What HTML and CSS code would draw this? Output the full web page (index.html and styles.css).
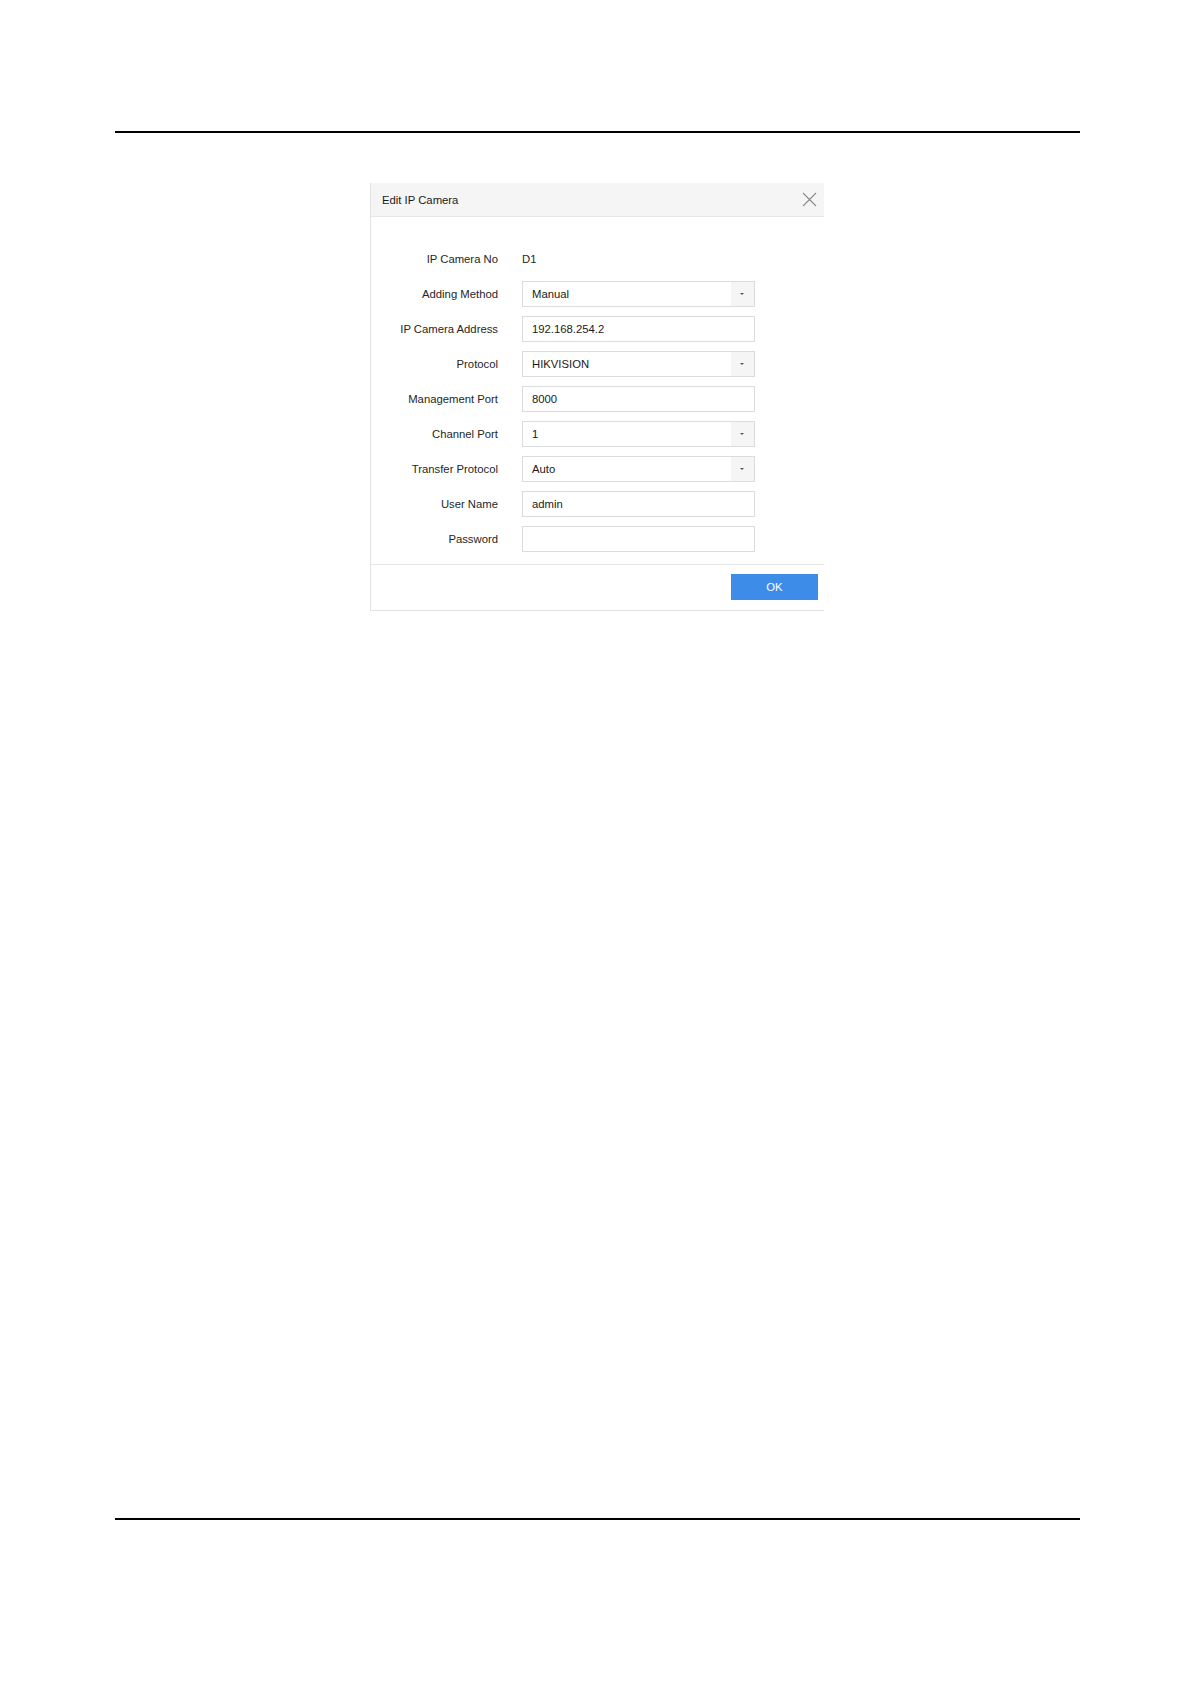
FILE: index.html
```html
<!DOCTYPE html>
<html>
<head>
    <title>Edit IP Camera</title>
    <link rel="stylesheet" href="styles.css">
</head>
<body>
    <div class="page">
        <div class="rule rule-top"></div>

        <div class="dialog">
            <div class="dialog-header">
                <span class="dialog-title">Edit IP Camera</span>
                <svg class="close" width="15" height="15" viewBox="0 0 15 15">
                    <path d="M1 1 L14 14 M14 1 L1 14" stroke="#8a8a8a" stroke-width="1.1" fill="none"/>
                </svg>
            </div>

            <div class="dialog-body">
                <div class="row">
                    <label>IP Camera No</label>
                    <span class="value">D1</span>
                </div>
                <div class="row">
                    <label>Adding Method</label>
                    <div class="field select"><span>Manual</span><span class="arrow"></span></div>
                </div>
                <div class="row">
                    <label>IP Camera Address</label>
                    <div class="field"><span>192.168.254.2</span></div>
                </div>
                <div class="row">
                    <label>Protocol</label>
                    <div class="field select"><span>HIKVISION</span><span class="arrow"></span></div>
                </div>
                <div class="row">
                    <label>Management Port</label>
                    <div class="field"><span>8000</span></div>
                </div>
                <div class="row">
                    <label>Channel Port</label>
                    <div class="field select"><span>1</span><span class="arrow"></span></div>
                </div>
                <div class="row">
                    <label>Transfer Protocol</label>
                    <div class="field select"><span>Auto</span><span class="arrow"></span></div>
                </div>
                <div class="row">
                    <label>User Name</label>
                    <div class="field"><span>admin</span></div>
                </div>
                <div class="row">
                    <label>Password</label>
                    <div class="field"></div>
                </div>
            </div>

            <div class="dialog-footer">
                <button type="button" class="btn-ok">OK</button>
            </div>
        </div>

        <div class="rule rule-bottom"></div>
    </div>
</body>
</html>
```

FILE: styles.css
```css
body {
    margin: 0;
    background: #fff;
    font-family: "Liberation Sans", Arial, sans-serif;
    color: #222;
}

.page {
    width: 1181px;
    height: 1685px;
    padding-top: 131px;
    box-sizing: border-box;
}

.rule {
    height: 2px;
    background: #000;
    margin-left: 115px;
    width: 965px;
}

.rule-bottom {
    margin-top: 907px;
}

.dialog {
    margin-top: 50px;
    margin-left: 370px;
    width: 454px;
    border-left: 1px solid #e2e2e2;
    border-bottom: 1px solid #e2e2e2;
    box-sizing: border-box;
}

.dialog-header {
    height: 33px;
    background: #f5f5f5;
    border-bottom: 1px solid #e6e6e6;
    display: flex;
    align-items: center;
    justify-content: space-between;
    padding: 0 7px 0 11px;
}

.dialog-title {
    font-size: 11.3px;
    color: #1a1a1a;
}

.dialog-body {
    padding: 29px 0 12px 0;
    display: flex;
    flex-direction: column;
    gap: 9px;
    border-bottom: 1px solid #e6e6e6;
}

.row {
    display: flex;
    align-items: center;
    height: 26px;
    gap: 24px;
}

.row label {
    width: 127px;
    text-align: right;
    font-size: 11.3px;
    color: #262626;
}

.value {
    font-size: 11.3px;
    color: #262626;
}

.field {
    width: 233px;
    height: 26px;
    border: 1px solid #dcdcdc;
    box-sizing: border-box;
    display: flex;
    align-items: center;
    padding-left: 9px;
    font-size: 11.3px;
    color: #1a1a1a;
}

.field.select {
    justify-content: space-between;
}

.arrow {
    width: 23px;
    height: 24px;
    background: #f5f5f5;
    position: relative;
}

.arrow::after {
    content: "";
    position: absolute;
    left: 9px;
    top: 11px;
    border-left: 2.5px solid transparent;
    border-right: 2.5px solid transparent;
    border-top: 2.5px solid #555;
}

.dialog-footer {
    display: flex;
    justify-content: flex-end;
    padding: 9px 6px 10px 0;
}

.btn-ok {
    width: 87px;
    height: 26px;
    border: none;
    background: #3d8ce8;
    color: #fff;
    font-family: "Liberation Sans", Arial, sans-serif;
    font-size: 11.3px;
    padding: 0;
}
```
